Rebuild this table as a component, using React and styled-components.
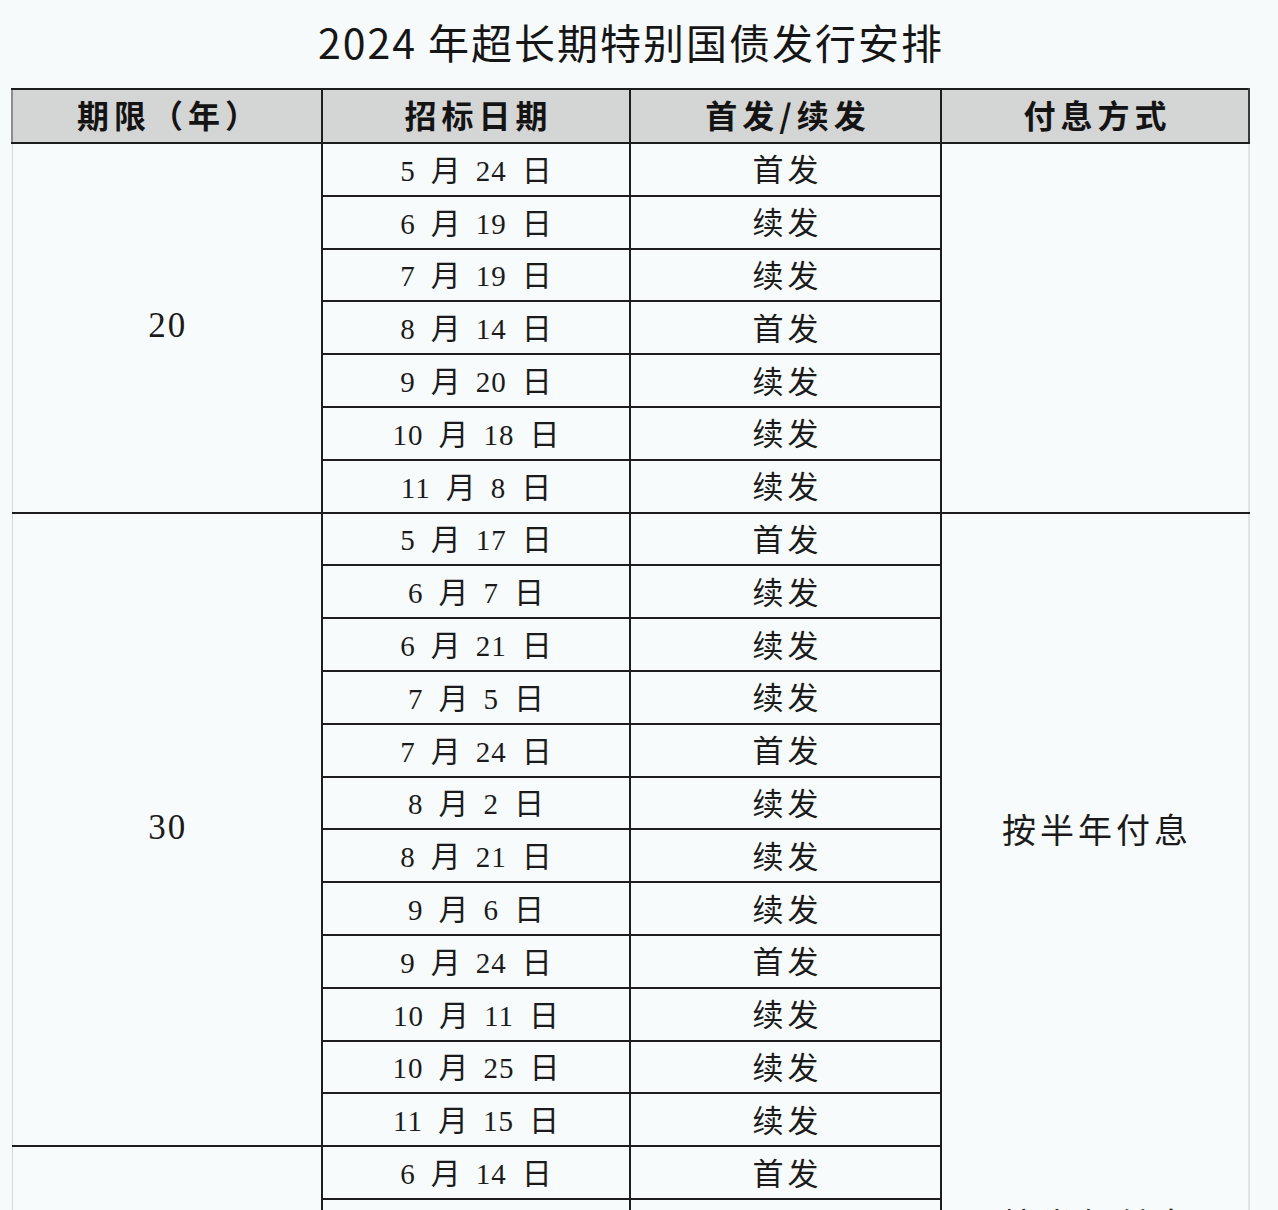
import React from "react";
import styled, { createGlobalStyle } from "styled-components";

const GlobalStyle = createGlobalStyle`
  html, body {
    margin: 0;
    padding: 0;
    background: #f7fafb;
  }
`;

const cjk = `"Noto Sans CJK SC", "Noto Sans", sans-serif`;
const serif = `"Liberation Serif", "Noto Sans CJK SC", serif`;

const LINE = "2px solid #1d1d1d";

const schedule = [
  {
    term: "20",
    pay: "",
    rows: [
      [5, 24, "首发"],
      [6, 19, "续发"],
      [7, 19, "续发"],
      [8, 14, "首发"],
      [9, 20, "续发"],
      [10, 18, "续发"],
      [11, 8, "续发"],
    ],
  },
  {
    term: "30",
    pay: "按半年付息",
    openBottom: true,
    rows: [
      [5, 17, "首发"],
      [6, 7, "续发"],
      [6, 21, "续发"],
      [7, 5, "续发"],
      [7, 24, "首发"],
      [8, 2, "续发"],
      [8, 21, "续发"],
      [9, 6, "续发"],
      [9, 24, "首发"],
      [10, 11, "续发"],
      [10, 25, "续发"],
      [11, 15, "续发"],
    ],
  },
  {
    term: "50",
    pay: "按半年付息",
    openTop: true,
    rows: [
      [6, 14, "首发"],
      [8, 9, "续发"],
      [9, 13, "续发"],
    ],
  },
];

const Page = styled.div`
  height: 1210px;
  overflow: hidden;
  background: #f7fafb;
  color: #1b1b1b;
`;

const Title = styled.h1`
  margin: 0;
  height: 88px;
  padding: 0 16px 7px 0;
  box-sizing: border-box;
  display: flex;
  align-items: center;
  justify-content: center;
  font-family: ${cjk};
  font-weight: 400;
  font-size: 41px;
  letter-spacing: 2px;
  color: #161616;
`;

const Table = styled.table`
  margin-left: 11px;
  width: 1237px;
  table-layout: fixed;
  border-collapse: collapse;
`;

const HeadCell = styled.th`
  height: 48px;
  padding: 0 0 4px 5px;
  background: #d4d5d5;
  border: ${LINE};
  font-family: ${cjk};
  font-weight: 700;
  font-size: 32px;
  letter-spacing: 5px;
  color: #141414;
  text-align: center;
  vertical-align: middle;

  &:first-child {
    border-left: 2px solid #8d8f8f;
  }
  &:last-child {
    border-right: 2px solid #3a3a3a;
  }
`;

const Cell = styled.td`
  height: 47.8px;
  padding: 0 0 3px;
  border: ${LINE};
  text-align: center;
  vertical-align: middle;
  background: #f8fbfc;

  &:first-child {
    border-left: 1px solid #d3d8d9;
  }
  ${(p) => p.$edge && `border-right: 2px solid #e0e4e5;`}
  ${(p) => p.$openTop && `border-top-style: hidden;`}
  ${(p) => p.$openBottom && `border-bottom-style: hidden;`}
`;

const Term = styled.span`
  font-family: ${serif};
  font-size: 35px;
  letter-spacing: 2px;
  padding-left: 2px;
`;

const DateText = styled.span`
  display: inline-flex;
  align-items: baseline;
  gap: 15px;
`;

const Num = styled.span`
  font-family: ${serif};
  font-size: 29px;
  letter-spacing: 1px;
`;

const Unit = styled.span`
  font-family: ${cjk};
  font-size: 30px;
`;

const Kind = styled.span`
  font-family: ${cjk};
  font-size: 31px;
  letter-spacing: 4px;
  padding-left: 4px;
`;

const Pay = styled.span`
  font-family: ${cjk};
  font-size: 34px;
  letter-spacing: 4px;
  padding-left: 4px;
`;

function BondRows({ group }) {
  const { term, pay, rows, openTop, openBottom } = group;
  const span = rows.length;

  return rows.map(([month, day, kind], i) => (
    <tr key={`${term}-${i}`}>
      {i === 0 && (
        <Cell rowSpan={span}>
          <Term>{term}</Term>
        </Cell>
      )}
      <Cell>
        <DateText>
          <Num>{month}</Num>
          <Unit>月</Unit>
          <Num>{day}</Num>
          <Unit>日</Unit>
        </DateText>
      </Cell>
      <Cell>
        <Kind>{kind}</Kind>
      </Cell>
      {i === 0 && (
        <Cell rowSpan={span} $edge $openTop={openTop} $openBottom={openBottom}>
          <Pay>{pay}</Pay>
        </Cell>
      )}
    </tr>
  ));
}

export default function App() {
  return (
    <>
      <GlobalStyle />
      <Page>
        <Title>2024 年超长期特别国债发行安排</Title>
        <Table>
          <colgroup>
            <col style={{ width: "310px" }} />
            <col style={{ width: "308px" }} />
            <col style={{ width: "311px" }} />
            <col style={{ width: "308px" }} />
          </colgroup>
          <thead>
            <tr>
              <HeadCell>期限（年）</HeadCell>
              <HeadCell>招标日期</HeadCell>
              <HeadCell>首发/续发</HeadCell>
              <HeadCell>付息方式</HeadCell>
            </tr>
          </thead>
          <tbody>
            {schedule.map((group) => (
              <BondRows key={group.term} group={group} />
            ))}
          </tbody>
        </Table>
      </Page>
    </>
  );
}
